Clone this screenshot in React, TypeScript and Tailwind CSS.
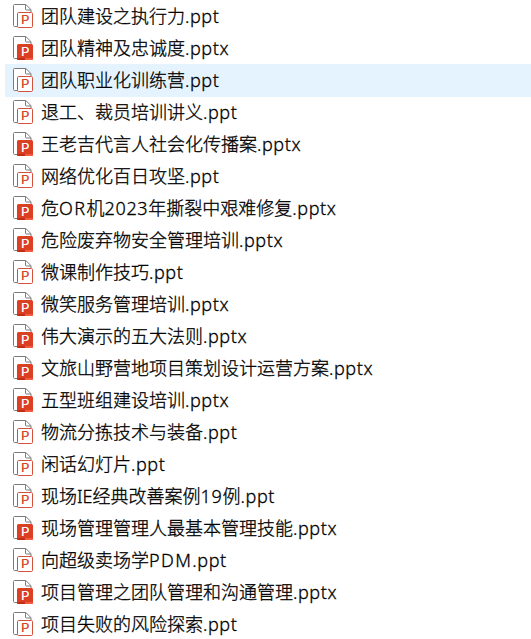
import clsx from "clsx";

const files = [
  "团队建设之执行力.ppt",
  "团队精神及忠诚度.pptx",
  "团队职业化训练营.ppt",
  "退工、裁员培训讲义.ppt",
  "王老吉代言人社会化传播案.pptx",
  "网络优化百日攻坚.ppt",
  "危OR机2023年撕裂中艰难修复.pptx",
  "危险废弃物安全管理培训.pptx",
  "微课制作技巧.ppt",
  "微笑服务管理培训.pptx",
  "伟大演示的五大法则.pptx",
  "文旅山野营地项目策划设计运营方案.pptx",
  "五型班组建设培训.pptx",
  "物流分拣技术与装备.ppt",
  "闲话幻灯片.ppt",
  "现场IE经典改善案例19例.ppt",
  "现场管理管理人最基本管理技能.pptx",
  "向超级卖场学PDM.ppt",
  "项目管理之团队管理和沟通管理.pptx",
  "项目失败的风险探索.ppt",
];

const selected = "团队职业化训练营.ppt";

const FileIcon = ({ filled }: { filled: boolean }) => {
  return (
    <svg width="20" height="24" viewBox="0 0 20 24" fill="none" className="shrink-0">
      {/* page with folded corner */}
      <path
        d="M4 22.5H1.5a1 1 0 0 1-1-1v-20a1 1 0 0 1 1-1h11.3l5.2 5.2V8.5H4z"
        fill="#fff"
      />
      <path
        d="M4 22.5H1.5a1 1 0 0 1-1-1v-20a1 1 0 0 1 1-1h11.3l5.2 5.2V8M12.5.5V5a1 1 0 0 0 1 1H18"
        stroke="#7b7b7b"
      />
      {filled ? (
        <>
          <rect x="4" y="8" width="16" height="16" rx="1.5" fill="#dc4024" />
          <path d="M4 22h8v2H5.5A1.5 1.5 0 0 1 4 22.5z" fill="#c12d17" />
          <path d="M12 22h8v.5a1.5 1.5 0 0 1-1.5 1.5H12z" fill="#f15a3a" />
        </>
      ) : (
        <rect x="4.5" y="8.5" width="15" height="15" rx="1.2" fill="#fff" stroke="#d35238" />
      )}
      <text
        transform="translate(12.3 20) scale(1.15 1)"
        textAnchor="middle"
        fill={filled ? "#fff" : "#d24625"}
        className="font-['Inter',sans-serif] text-[11.5px] font-medium"
      >
        P
      </text>
    </svg>
  );
};

const tracking = (part: string) => {
  if (/^(OR|PDM)$/.test(part)) return "tracking-[1.4px]";
  if (/^\d+$/.test(part)) return "tracking-[0.7px]";
  if (part.startsWith(".")) return "tracking-[0.6px]";
  return undefined;
};

const FileName = ({ name }: { name: string }) => {
  return (
    <span className="whitespace-nowrap font-['Noto_Sans','Noto_Sans_CJK_SC',sans-serif] text-[18px] leading-8 font-light text-black [-webkit-text-stroke:0.3px_#000]">
      {name.split(/([A-Z]+|\d+|\.pptx?)/).map((part, i) => (
        <span key={i} className={tracking(part)}>
          {part}
        </span>
      ))}
    </span>
  );
};

const App = () => {
  return (
    <div className="h-[639px] w-[531px] overflow-hidden bg-white pl-[5px]">
      <ul>
        {files.map((name) => (
          <li
            key={name}
            className={clsx(
              "flex h-8 items-center gap-2 pl-2",
              name === selected && "bg-[#e5f3ff] shadow-[0_1px_0_#e5f3ff]"
            )}
          >
            <FileIcon filled={name.endsWith(".pptx")} />
            <FileName name={name} />
          </li>
        ))}
      </ul>
    </div>
  );
};

export default App;
